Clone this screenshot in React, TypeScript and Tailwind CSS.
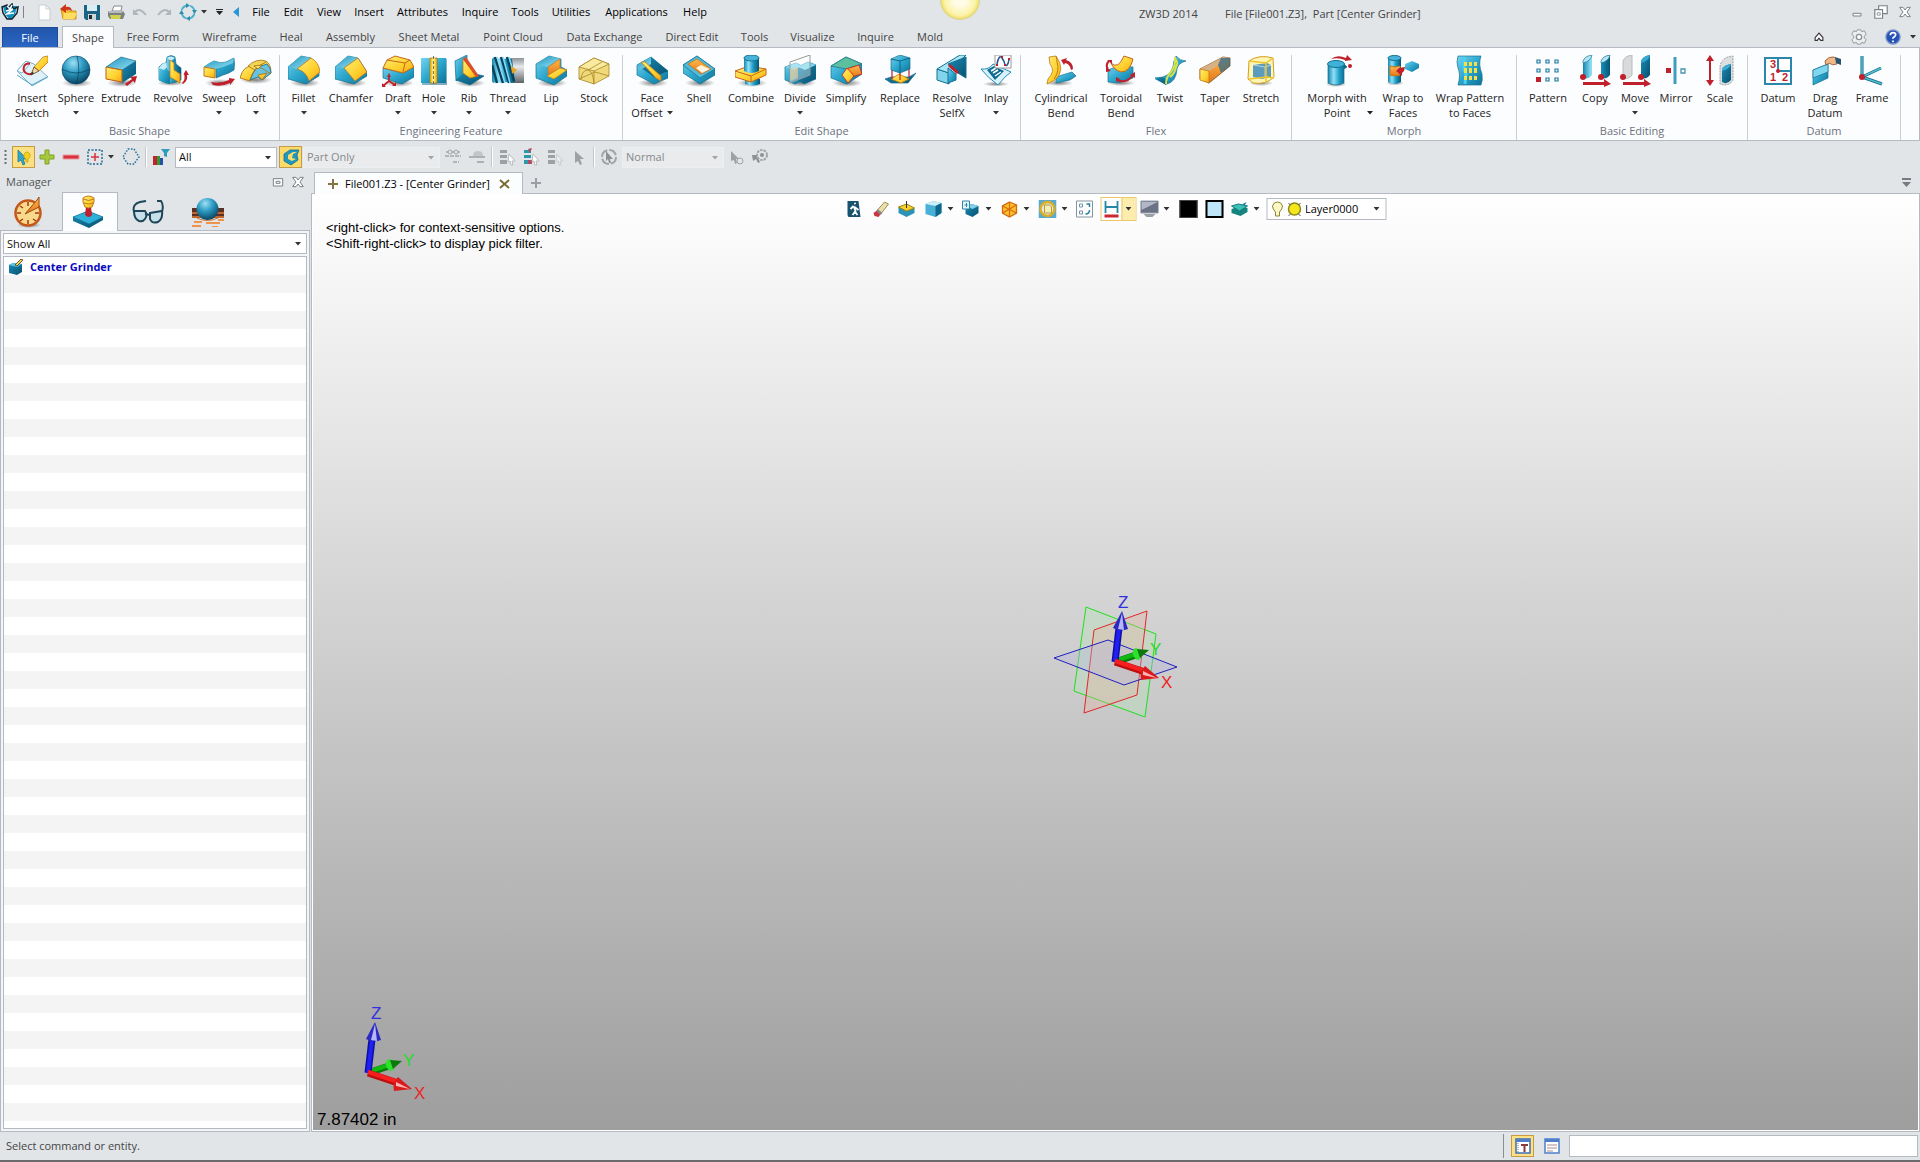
import type { ReactNode } from 'react';
import clsx from 'clsx';

const TEAL = 'url(#teal)';
const TEAL_TOP = 'url(#tealTop)';
const TEAL_DARK = 'url(#tealDark)';
const TUBE = 'url(#tube)';
const YELLOW = 'url(#yellow)';
const ORANGE = 'url(#orange)';
const BALL = 'url(#ball)';
const SHADOW = 'url(#shadow)';
const EDGE = '#17708f';
const GOLD = '#c07a1a';
const RED = '#c01f2c';

/* Shared gradients used by every icon */
function Gradients() {
  return (
    <svg width="0" height="0" className="absolute" aria-hidden="true">
      <defs>
        <linearGradient id="teal" x1="0" y1="0" x2="1" y2="1">
          <stop offset="0" stopColor="#74d3ef" />
          <stop offset="0.5" stopColor="#2ba6cd" />
          <stop offset="1" stopColor="#0d7299" />
        </linearGradient>
        <linearGradient id="tealTop" x1="0" y1="0" x2="1" y2="1">
          <stop offset="0" stopColor="#1f93bc" />
          <stop offset="1" stopColor="#98e4f8" />
        </linearGradient>
        <linearGradient id="tealDark" x1="0" y1="0" x2="1" y2="1">
          <stop offset="0" stopColor="#1b8cb5" />
          <stop offset="1" stopColor="#07506f" />
        </linearGradient>
        <linearGradient id="tube" x1="0" y1="0" x2="1" y2="0">
          <stop offset="0" stopColor="#1684ae" />
          <stop offset="0.3" stopColor="#8fe0f6" />
          <stop offset="0.6" stopColor="#1e9cc6" />
          <stop offset="1" stopColor="#075475" />
        </linearGradient>
        <linearGradient id="yellow" x1="0" y1="0" x2="1" y2="1">
          <stop offset="0" stopColor="#ffee78" />
          <stop offset="0.6" stopColor="#ffd02c" />
          <stop offset="1" stopColor="#f3a319" />
        </linearGradient>
        <linearGradient id="orange" x1="0" y1="0" x2="0" y2="1">
          <stop offset="0" stopColor="#ffb94a" />
          <stop offset="1" stopColor="#e5761a" />
        </linearGradient>
        <radialGradient id="ball" cx="0.4" cy="0.25" r="0.8">
          <stop offset="0" stopColor="#9be0f4" />
          <stop offset="0.45" stopColor="#2c99c1" />
          <stop offset="1" stopColor="#053c58" />
        </radialGradient>
        <radialGradient id="shadow">
          <stop offset="0" stopColor="#000" stopOpacity="0.5" />
          <stop offset="1" stopColor="#000" stopOpacity="0" />
        </radialGradient>
        <linearGradient id="metal" x1="0" y1="0" x2="0" y2="1">
          <stop offset="0" stopColor="#8d9499" />
          <stop offset="0.35" stopColor="#e8eaec" />
          <stop offset="1" stopColor="#5e6468" />
        </linearGradient>
        <radialGradient id="glow">
          <stop offset="0.3" stopColor="#fffbe6" />
          <stop offset="0.8" stopColor="#fbf3a8" />
          <stop offset="1" stopColor="#ecd95c" />
        </radialGradient>
      </defs>
    </svg>
  );
}

const shade = <ellipse cx="17" cy="28" rx="15" ry="4" fill={SHADOW} />;

const icons: Record<string, ReactNode> = {
  sketch: (
    <g>
      <path d="M1 16 10 6l8 3 14 13-16 9z" fill="#dff1f9" stroke="#7fb4cc" />
      <path d="M1 16l9-10 4 3-8 9z" fill="#f3fafd" stroke="#7fb4cc" />
      <path d="M1 20l15 10 15-8" fill="none" stroke="#4fa5c9" />
      <path d="M14 8.500C7 8 6 15 10 18c3 2 6 1 8-1" fill="none" stroke={RED} strokeWidth="2" />
      <path d="M18 12 27 2l5-1v6L23 16z" fill={YELLOW} stroke={GOLD} strokeWidth="0.8" />
      <path d="M18 12l5 4-8 4z" fill="#f3d7a5" stroke="#5a4020" strokeWidth="0.8" />
      <path d="M16 17l2 1-3 2z" fill="#222" />
    </g>
  ),
  sphere: (
    <g>
      {shade}
      <circle cx="16" cy="15" r="14" fill={BALL} stroke="#07496a" strokeWidth="0.6" />
      <path d="M2 14q14 8 28 0M17 1q4 14-1 28" fill="none" stroke="#06384f" strokeWidth="0.9" opacity="0.7" />
    </g>
  ),
  extrude: (
    <g>
      {shade}
      <path d="M1 12 16 2l15 4-14 9z" fill={TEAL_TOP} stroke={EDGE} strokeWidth="0.7" />
      <path d="M17 15 31 6v13l-14 9z" fill={TEAL_DARK} />
      <path d="M1 12l16 3v12L1 24z" fill={YELLOW} stroke="#c45b12" />
      <path d="M20 29l7-5-2-2 7-1-2 7-2-2-6 5z" fill={RED} />
    </g>
  ),
  revolve: (
    <g>
      <ellipse cx="14" cy="28" rx="14" ry="3" fill={SHADOW} />
      <path d="M2 12q3-4 7-4l1-6q4-3 8 0l1 7 5 4v12q-10 6-22 0z" fill={TUBE} stroke={EDGE} strokeWidth="0.7" />
      <path d="M2 13q3-5 7-5l1 6 3 3v12q-7-1-11-4z" fill={TEAL} />
      <path d="M2 13q3-5 7-5l1 4-3 3zM10 3q4-3 8 0l-4 3z" fill="#c5eefa" />
      <path d="M13 5l4 3v7l6 4v9l-10-6z" fill={YELLOW} stroke={GOLD} strokeWidth="0.8" />
      <path d="M25 28q4-4 2-9l-1 1 3-5 3 5h-2q1 6-4 9z" fill={RED} />
    </g>
  ),
  sweep: (
    <g>
      {shade}
      <path d="M1 12q6-4 10-6 7 3 12 1l8-4q1 6 0 12-6 4-11 5l-7 3V14z" fill={TEAL} stroke={EDGE} strokeWidth="0.7" />
      <path d="M1 12q6-5 10-6 6 3 12 1l8-4-1 5q-8 3-10 4l-8 2z" fill={TEAL_TOP} />
      <path d="M1 12l11 2v9L1 21z" fill={YELLOW} stroke={GOLD} />
      <path d="M8 27q9 2 18-2v-2l6 1-5 6v-2q-9 4-17 2z" fill={RED} />
    </g>
  ),
  loft: (
    <g>
      <ellipse cx="16" cy="25" rx="16" ry="4" fill={SHADOW} />
      <path d="M0 23Q3 10 14 11l4 10-8 5z" fill={YELLOW} stroke="#a06c18" strokeWidth="0.8" />
      <path d="M8 11Q16 3 26 6q5 3 5 12l-9 7-4-8z" fill="#f2d552" stroke="#a06c18" strokeWidth="0.8" />
      <path d="M10 25q4-11 8-13l9-3q4 4 4 9l-9 7-4-3z" fill="#69c3e0" stroke="#166c8c" strokeWidth="0.8" />
      <path d="M10 25q4-13 16-18M14 11q8 1 17 8" fill="none" stroke="#a06c18" strokeWidth="0.8" />
      <path d="M18 20l9-2-5 7zM14 11l8-1-4 4z" fill={YELLOW} stroke="#a06c18" strokeWidth="0.8" />
    </g>
  ),
  fillet: (
    <g>
      {shade}
      <path d="M0 12 13 1l10 2 8 14v4L18 29 0 24z" fill={TEAL} stroke={EDGE} strokeWidth="0.7" />
      <path d="M0 12 13 1l10 2L9 14z" fill={TEAL_TOP} />
      <path d="M9 14 23 3q8 4 9 14L21 26Q18 16 9 14z" fill={YELLOW} stroke={GOLD} strokeWidth="0.8" />
    </g>
  ),
  chamfer: (
    <g>
      {shade}
      <path d="M0 12 13 1l10 2 9 14v4L19 29 0 24z" fill={TEAL} stroke={EDGE} strokeWidth="0.7" />
      <path d="M0 12 13 1l10 2L9 13z" fill={TEAL_TOP} />
      <path d="M9 13 23 3l9 14-12 9z" fill={YELLOW} stroke={GOLD} strokeWidth="0.8" />
    </g>
  ),
  draft: (
    <g>
      {shade}
      <path d="M1 13l20 5 11-6v10l-12 7-19-6z" fill={TEAL} stroke={EDGE} strokeWidth="0.7" />
      <path d="M1 13 5 5l8-4 15 4 4 7-11 6z" fill={YELLOW} stroke="#c4661a" />
      <path d="M5 5l18 3-2 9M23 8l5-3" fill="none" stroke="#c4661a" />
      <path d="M7 20v6l-6 5M7 26l6 4" fill="none" stroke={RED} strokeWidth="1.800" />
      <path d="M5 22l2-4 2 4zM0 28v4h4zM14 27v4h-4z" fill={RED} />
    </g>
  ),
  hole: (
    <g>
      <path d="M4 4h25v26H4z" fill={TEAL_DARK} opacity="0.5" />
      <path d="M3 3h25v25H3z" fill={TEAL} />
      <path d="M12 3h7v25h-7z" fill="#f7c92e" stroke="#a8790c" strokeWidth="0.8" />
      <path d="M15.500 3v25" stroke="#fff3a0" strokeWidth="2" />
      <path d="M15.500 1v30" stroke="#555" strokeDasharray="3 2" strokeWidth="0.8" />
    </g>
  ),
  rib: (
    <g>
      {shade}
      <path d="M2 6l12-6v20L3 26z" fill={TEAL} stroke={EDGE} strokeWidth="0.7" />
      <path d="M14 17l17 4-14 9-14-5z" fill={TEAL_DARK} stroke={EDGE} strokeWidth="0.7" />
      <path d="M10 4l15 17-8 2-7-5z" fill={YELLOW} stroke={GOLD} strokeWidth="0.8" />
      <path d="M10 4l3-2 13 19-3 1z" fill="#d8502a" />
    </g>
  ),
  thread: (
    <g>
      <path d="M18 3h14v25H18z" fill="url(#metal)" />
      <path d="M0 4q3-4 5 0l3-1 4 1 4-1 4 1 3 23-4 1-5-1-4 1-5-1-4 1-1-2z" fill={TUBE} />
      <path d="M3 2l8 26M9 2l8 26M15 2l7 24M0 10l5 18" stroke="#06435f" strokeWidth="2.500" />
      <path d="M5 2l8 26M11 2l7 26M17 2l4 14" stroke="#8fd9f0" strokeWidth="1.500" />
      <path d="M19 11l6 4-5 4z" fill="#e6a51e" />
    </g>
  ),
  lip: (
    <g>
      {shade}
      <path d="M1 9 14 1l12 3v8l6 3v6l-13 9L1 23z" fill={TEAL} stroke={EDGE} strokeWidth="0.7" />
      <path d="M1 9 14 1l12 3-14 8z" fill={TEAL_TOP} />
      <path d="M13 12l12-8v9l-12 8z" fill={ORANGE} stroke={GOLD} strokeWidth="0.7" />
      <path d="M12 21l13-8 7 2-13 9z" fill={YELLOW} stroke={GOLD} strokeWidth="0.7" />
    </g>
  ),
  stock: (
    <g stroke="#a8852a" strokeWidth="0.8">
      <path d="M1 12 16 3l15 6v12l-15 8L1 24z" fill="#f0d978" />
      <path d="M1 12 16 3l15 6-15 7z" fill="#f8ea9e" />
      <path d="M16 16v13M3 24q1-9 7-9 5 1 6 14M10 15l14-8M1 24l16-7 14 4" fill="none" />
    </g>
  ),
  faceOffset: (
    <g>
      {shade}
      <path d="M1 10 15 2l17 14v7l-14 6L1 20z" fill={TEAL} stroke={EDGE} strokeWidth="0.7" />
      <path d="M1 10 15 2l17 14-14 6z" fill={TEAL_DARK} />
      <path d="M1 10 15 2v7L4 15z" fill={TEAL_TOP} />
      <path d="M5 7l4 0 16 14v5l-5-3z" fill={YELLOW} stroke={GOLD} strokeWidth="0.8" />
    </g>
  ),
  shell: (
    <g>
      {shade}
      <path d="M0 10 14 1l18 13v6l-15 9L0 18z" fill={TEAL} stroke={EDGE} strokeWidth="0.7" />
      <path d="M0 10 14 1l18 13-15 9z" fill="#52bbdc" stroke={EDGE} strokeWidth="0.7" />
      <path d="M5 9l9-5 14 10-10 5z" fill={ORANGE} stroke={GOLD} strokeWidth="0.8" />
      <path d="M13 13l5-3 9 4-8 4z" fill="#fff4df" />
    </g>
  ),
  combine: (
    <g>
      {shade}
      <path d="M10 24h15v5q-7 3-15 0z" fill={TUBE} />
      <path d="M0 16l14-5 17 3v6l-15 7L0 22z" fill={YELLOW} stroke="#c4661a" />
      <path d="M0 16l16 5v6M16 21l15-7" fill="none" stroke="#c4661a" />
      <path d="M9 3v13q7 4 15 0V3z" fill={TUBE} />
      <ellipse cx="16.500" cy="3" rx="7.500" ry="3" fill="#44b4da" stroke={EDGE} />
    </g>
  ),
  divide: (
    <g>
      {shade}
      <path d="M1 12l11-4 6 3v15l-7 3-10-4z" fill={TEAL} stroke={EDGE} strokeWidth="0.7" />
      <path d="M14 12l10-5 8 3v14l-12 5-6-4z" fill={TEAL_DARK} stroke={EDGE} strokeWidth="0.7" />
      <path d="M1 12l9 3 8-4-6-3zM14 12l7 3 11-5-8-3z" fill="#7ad4ee" />
      <path d="M6 7 26 0v20L6 28z" fill="#fff" fillOpacity="0.35" stroke="#999" />
      <path d="M6 14l8-2v11l-8 3z" fill="#f1ca92" fillOpacity="0.6" />
    </g>
  ),
  simplify: (
    <g>
      {shade}
      <path d="M1 11 16 2l16 7v10l-15 10L1 23z" fill={TEAL} stroke={EDGE} strokeWidth="0.7" />
      <path d="M1 11 16 2l16 7-16 5z" fill="#5cbf9d" stroke={EDGE} strokeWidth="0.7" />
      <path d="M16 14l13-4 3 9-10 3z" fill={ORANGE} stroke={RED} strokeWidth="0.8" />
      <path d="M12 20l5-7 7 8-6 7z" fill={YELLOW} stroke={RED} strokeWidth="0.8" />
    </g>
  ),
  replace: (
    <g>
      <path d="M1 24l6-2h18l7-4-8 10H7z" fill={TEAL_DARK} stroke={EDGE} strokeWidth="0.7" />
      <path d="M7 24l8-5 10 5-8 4z" fill={YELLOW} stroke={GOLD} strokeWidth="0.8" />
      <path d="M8 14v10M16 16v9M25 13v9" stroke={RED} strokeWidth="1.200" />
      <path d="M7 4l9-4 10 3v11l-10 4-9-3z" fill={TEAL} stroke={EDGE} strokeWidth="0.7" />
      <path d="M7 4l9 2 10-3M16 6v12" fill="none" stroke="#0c6488" />
    </g>
  ),
  resolve: (
    <g>
      <path d="M1 14l12 4v11L1 25z" fill="#82d3ec" stroke={EDGE} />
      <path d="M1 14 24 0h6L13 18z" fill="#a8e5f7" stroke={EDGE} />
      <path d="M12 9 30 2v21L17 15z" fill={TEAL_DARK} stroke={EDGE} />
      <path d="M12 13l8 6v6l-8 3z" fill={TEAL} stroke={EDGE} />
      <path d="M13 10l9 8" stroke={RED} strokeWidth="3" />
    </g>
  ),
  inlay: (
    <g>
      <ellipse cx="16" cy="29" rx="13" ry="2.500" fill={SHADOW} />
      <path d="M1 14q8 1 12-5l18 8q-6 4-13 13Q8 23 1 14z" fill="#d8f1fa" stroke="#238fb7" />
      <path d="M7 15l7-4 10 5-9 9z" fill="#0e6c94" />
      <path d="M11 16l5-3M13 18l5-3M15 21l6-4" stroke="#fff" strokeWidth="1.500" />
      <path d="M15 0h16v13H15z" fill="#fff" stroke="#999" />
      <path d="M17 9q2-10 5-6t3 7q3 2 4-6" fill="none" stroke="#20538f" strokeWidth="1.500" />
      <path d="M16 9h2v2h-2zM21 1h2v2h-2zM24 9h2v2h-2zM28 3h2v2h-2z" fill={RED} />
    </g>
  ),
  cylBend: (
    <g>
      <ellipse cx="14" cy="28" rx="14" ry="3" fill={SHADOW} />
      <path d="M11 22l16-5 4 4-6 4-14 3z" fill={TEAL} stroke={EDGE} strokeWidth="0.7" />
      <path d="M4 2l7-1q10 14-1 24l-8 4 1-5q8-8 2-15z" fill={YELLOW} stroke={GOLD} strokeWidth="0.8" />
      <path d="M11 1q1 4 1 6 3 9-3 17" fill="none" stroke={GOLD} />
      <path d="M26 15q-1-6-6-7l-1 2-3-5 6-2-1 2q7 2 7 9z" fill={RED} />
    </g>
  ),
  torBend: (
    <g>
      <ellipse cx="16" cy="28" rx="14" ry="3" fill={SHADOW} />
      <path d="M3 15l10-4 15 1v11l-15 5-10-1z" fill={TEAL} stroke={EDGE} strokeWidth="0.7" />
      <path d="M6 8q7 7 13-7l9 3q-3 13-12 13-7-2-10-9z" fill={YELLOW} stroke="#c4661a" />
      <path d="M3 14q-3-4 1-8M12 25q10 4 16-5" fill="none" stroke={RED} strokeWidth="2" />
      <path d="M2 5h5v4zM25 20l5-3v6zM11 22l4 2-4 3zM1 12l5 4-5 1z" fill={RED} />
    </g>
  ),
  twist: (
    <g>
      <path d="M1 23l8-1q10-3 11-16l2-5q4 5 10 5-8 2-9 8-1 13-10 15-8-5-12-6z" fill={TEAL} stroke={EDGE} strokeWidth="0.7" />
      <path d="M1 24l8-2 5 5-2 3z" fill={TEAL_DARK} />
      <path d="M12 29q0-7 5-12 5-6 4-15M21 3q4 5 1 9-1 6-6 10" fill="none" stroke="#d5e44c" strokeWidth="2" />
    </g>
  ),
  taper: (
    <g>
      <path d="M1 14 24 2l7 1v8L10 28l-9-4z" fill={ORANGE} stroke="#7a4a20" strokeWidth="0.8" />
      <path d="M1 14 24 2l7 1L10 16z" fill="#d7b184" />
      <path d="M22 3l9 0v8l-9 7-3-8z" fill="#23658c" opacity="0.7" />
      <path d="M1 14l9 2v12l-9-3z" fill={YELLOW} stroke={GOLD} strokeWidth="0.8" />
    </g>
  ),
  stretch: (
    <g>
      <ellipse cx="16" cy="28" rx="12" ry="3" fill={SHADOW} />
      <path d="M4 6q10-7 24-3l1 19q-8 8-21 6l-5-4z" fill="#fff6b5" stroke="#d69c1e" />
      <path d="M8 10l14-2 4 2v12l-9 2-9-2z" fill="#5b9bbd" />
      <path d="M8 10l12 2v12M20 12l6-2" fill="none" stroke="#c8dfea" strokeWidth="0.8" />
      <path d="M4 6l17 2v20M21 8l7-5M4 24l18-2 7 1" fill="none" stroke="#f0c52c" strokeWidth="1.500" />
    </g>
  ),
  morph: (
    <g>
      <ellipse cx="15" cy="29" rx="11" ry="3" fill={SHADOW} />
      <path d="M7 10v18q8 4 16 0V14l3-2-3-3z" fill={TUBE} stroke={EDGE} strokeWidth="0.7" />
      <ellipse cx="15" cy="9" rx="8.500" ry="3.500" fill="#3fb2d9" stroke={EDGE} />
      <path d="M10 4q6-5 15-1l1-3 5 5-7 1 0-1q-7-3-14-1z" fill={RED} />
      <circle cx="29" cy="11" r="2" fill={RED} />
    </g>
  ),
  wrapFaces: (
    <g>
      <ellipse cx="8" cy="28" rx="9" ry="2.500" fill={SHADOW} />
      <path d="M1 3v24q6 4 13 0V3z" fill={TUBE} />
      <ellipse cx="7.500" cy="3" rx="6.500" ry="2.500" fill="#44b4da" stroke={EDGE} />
      <path d="M3 11q5 2 10 0v9q-5 2-10 0z" fill={ORANGE} stroke={GOLD} />
      <path d="M18 9l7-3 7 3v4l-7 4-7-3z" fill={TEAL} />
      <path d="M18 12l-6 1-3 3 6 5v-3l2-2z" fill={RED} />
    </g>
  ),
  wrapPattern: (
    <g>
      <path d="M4 1h23q-3 8 1 18 1 6-1 11H4q3-10 0-17-2-6 0-12z" fill={TEAL} stroke={EDGE} strokeWidth="0.7" />
      <path d="M11 2q-3 9 1 17l-1 10" fill="none" stroke="#4bd0ee" strokeWidth="3" />
      <path d="M10 7h3v4h-3zM15 7h3v4h-3zM20 7h3v4h-3zM10 13h3v5h-3zM15 13h3v5h-3zM20 13h3v5h-3zM10 21h3v4h-3zM15 21h3v4h-3zM20 21h3v4h-3z" fill="#f5e146" />
    </g>
  ),
  pattern: (
    <g fill="#eaf6fb" stroke="#247ba3" strokeWidth="1.200">
      {[5, 14, 23].map((y) =>
        [5, 14, 23].map((x) => <path key={`${x}-${y}`} d={`M${x} ${y}h3v3h-3z`} />),
      )}
      <path d="M4 22h5v5H4z" fill={RED} stroke="none" />
    </g>
  ),
  copy: (
    <g>
      <path d="M4 6q2-5 9-6v20q-4 5-9 3zM22 6q2-5 9-6v20q-4 5-9 3z" fill={TUBE} />
      <path d="M4 6q2-5 9-6-1 6-9 8zM22 6q2-5 9-6-1 6-9 8z" fill="#b6e6f5" stroke={EDGE} strokeWidth="0.6" />
      <circle cx="4" cy="22" r="3" fill={RED} />
      <circle cx="22" cy="22" r="3" fill={RED} />
      <path d="M4 27h21v-3l7 5-7 3v-2H4z" fill={RED} />
    </g>
  ),
  move: (
    <g>
      <path d="M4 6q2-5 9-6v20q-4 5-9 3z" fill="#d8dadb" stroke="#bbb" />
      <path d="M22 6q2-5 9-6v20q-4 5-9 3z" fill={TEAL_DARK} />
      <path d="M22 6q2-5 9-6-1 6-9 8z" fill="#34a8d2" />
      <circle cx="4" cy="22" r="3" fill={RED} />
      <circle cx="22" cy="22" r="3" fill={RED} />
      <path d="M4 27h21v-3l7 5-7 3v-2H4z" fill={RED} />
    </g>
  ),
  mirror: (
    <g>
      <path d="M15 2v27" stroke="#3f9dbd" strokeWidth="3" />
      <path d="M6 13h5v5H6z" fill={RED} />
      <path d="M21 14h4v4h-4z" fill="#fff" stroke="#4794b3" strokeWidth="1.300" />
    </g>
  ),
  scale: (
    <g>
      <path d="M6 0l4 6H7v19h3l-4 6-4-6h3V6H2z" fill={RED} />
      <path d="M16 12q1-10 13-11v24q-4 7-13 4z" fill="#dcdfe0" stroke="#9a9fa2" strokeDasharray="2 1" />
      <path d="M18 14q2-4 9-5v16q-4 5-9 2z" fill={TEAL_DARK} />
      <path d="M18 14q2-4 9-5-1 5-9 7z" fill="#3aabd3" />
    </g>
  ),
  datum: (
    <g>
      <path d="M3 3h26v26H3z" fill="#fff" stroke="#2c86ab" strokeWidth="2" />
      <path d="M16 3v13h13" fill="none" stroke="#2c86ab" strokeWidth="2" />
      <circle cx="16" cy="16" r="2" fill={RED} />
      <g fill={RED} fontFamily="Liberation Sans, sans-serif" fontWeight="700" fontSize="11">
        <text x="8" y="13">3</text>
        <text x="8" y="26">1</text>
        <text x="20" y="26">2</text>
      </g>
    </g>
  ),
  dragDatum: (
    <g>
      <path d="M4 15l15-6v14L4 30z" fill={TEAL} stroke={EDGE} strokeWidth="0.7" />
      <path d="M4 15l15-6v8L4 23z" fill="#7fd6ee" stroke={EDGE} strokeWidth="0.7" />
      <path d="M16 6q4-5 9-4l3 2v5q-5 2-8-1l-3 2z" fill="#f1b98a" stroke="#8b4d22" strokeWidth="0.8" />
      <path d="M26 2l6 2v6l-5-2z" fill="#26536d" />
    </g>
  ),
  frame: (
    <g>
      <path d="M6 22V1M6 22l19-9M6 22l20 7" stroke="#0e617e" strokeWidth="3" />
      <path d="M6 22V1M6 22l19-9M6 22l20 7" stroke="#4fc0d6" strokeWidth="1.500" />
      <circle cx="6" cy="22" r="3" fill={RED} />
    </g>
  ),
};

function Caret({ className }: { className?: string }) {
  return (
    <svg width="6" height="4" viewBox="0 0 6 4" className={clsx('shrink-0', className ?? 'text-[#333]')} aria-hidden="true">
      <path d="M0 0h6L3 3.500z" fill="currentColor" />
    </svg>
  );
}

interface Tool {
  icon: string;
  lines: string[];
  width: string;
  menu?: 'below' | 'inline' | 'side';
}

interface Group {
  label: string;
  pad: string;
  tools: Tool[];
}

const groups: Group[] = [
  {
    label: 'Basic Shape',
    pad: 'pl-2 pr-[5px]',
    tools: [
      { icon: 'sketch', lines: ['Insert', 'Sketch'], width: 'w-12' },
      { icon: 'sphere', lines: ['Sphere'], width: 'w-10', menu: 'below' },
      { icon: 'extrude', lines: ['Extrude'], width: 'w-[50px]' },
      { icon: 'revolve', lines: ['Revolve'], width: 'w-[54px]' },
      { icon: 'sweep', lines: ['Sweep'], width: 'w-[38px]', menu: 'below' },
      { icon: 'loft', lines: ['Loft'], width: 'w-9', menu: 'below' },
    ],
  },
  {
    label: 'Engineering Feature',
    pad: 'pl-[3px] pr-[9px]',
    tools: [
      { icon: 'fillet', lines: ['Fillet'], width: 'w-[41px]', menu: 'below' },
      { icon: 'chamfer', lines: ['Chamfer'], width: 'w-[54px]' },
      { icon: 'draft', lines: ['Draft'], width: 'w-10', menu: 'below' },
      { icon: 'hole', lines: ['Hole'], width: 'w-[31px]', menu: 'below' },
      { icon: 'rib', lines: ['Rib'], width: 'w-10', menu: 'below' },
      { icon: 'thread', lines: ['Thread'], width: 'w-[38px]', menu: 'below' },
      { icon: 'lip', lines: ['Lip'], width: 'w-12' },
      { icon: 'stock', lines: ['Stock'], width: 'w-[38px]' },
    ],
  },
  {
    label: 'Edit Shape',
    pad: 'pl-[5px] pr-1',
    tools: [
      { icon: 'faceOffset', lines: ['Face', 'Offset'], width: 'w-12', menu: 'inline' },
      { icon: 'shell', lines: ['Shell'], width: 'w-[46px]' },
      { icon: 'combine', lines: ['Combine'], width: 'w-[58px]' },
      { icon: 'divide', lines: ['Divide'], width: 'w-10', menu: 'below' },
      { icon: 'simplify', lines: ['Simplify'], width: 'w-[52px]' },
      { icon: 'replace', lines: ['Replace'], width: 'w-14' },
      { icon: 'resolve', lines: ['Resolve', 'SelfX'], width: 'w-12' },
      { icon: 'inlay', lines: ['Inlay'], width: 'w-10', menu: 'below' },
    ],
  },
  {
    label: 'Flex',
    pad: 'px-[9px]',
    tools: [
      { icon: 'cylBend', lines: ['Cylindrical', 'Bend'], width: 'w-[62px]' },
      { icon: 'torBend', lines: ['Toroidal', 'Bend'], width: 'w-[58px]' },
      { icon: 'twist', lines: ['Twist'], width: 'w-10' },
      { icon: 'taper', lines: ['Taper'], width: 'w-[50px]' },
      { icon: 'stretch', lines: ['Stretch'], width: 'w-[42px]' },
    ],
  },
  {
    label: 'Morph',
    pad: 'px-[9px]',
    tools: [
      { icon: 'morph', lines: ['Morph with', 'Point'], width: 'w-[72px]', menu: 'side' },
      { icon: 'wrapFaces', lines: ['Wrap to', 'Faces'], width: 'w-[60px]' },
      { icon: 'wrapPattern', lines: ['Wrap Pattern', 'to Faces'], width: 'w-[74px]' },
    ],
  },
  {
    label: 'Basic Editing',
    pad: 'px-2',
    tools: [
      { icon: 'pattern', lines: ['Pattern'], width: 'w-[46px]' },
      { icon: 'copy', lines: ['Copy'], width: 'w-12' },
      { icon: 'move', lines: ['Move'], width: 'w-8', menu: 'below' },
      { icon: 'mirror', lines: ['Mirror'], width: 'w-[50px]' },
      { icon: 'scale', lines: ['Scale'], width: 'w-[38px]' },
    ],
  },
  {
    label: 'Datum',
    pad: 'pl-2 pr-[6px]',
    tools: [
      { icon: 'datum', lines: ['Datum'], width: 'w-11' },
      { icon: 'dragDatum', lines: ['Drag', 'Datum'], width: 'w-[50px]' },
      { icon: 'frame', lines: ['Frame'], width: 'w-11' },
    ],
  },
];

const menus = [
  { label: 'File', width: 'w-8' },
  { label: 'Edit', width: 'w-[33px]' },
  { label: 'View', width: 'w-[38px]' },
  { label: 'Insert', width: 'w-[42px]' },
  { label: 'Attributes', width: 'w-[65px]' },
  { label: 'Inquire', width: 'w-[50px]' },
  { label: 'Tools', width: 'w-10' },
  { label: 'Utilities', width: 'w-[52px]' },
  { label: 'Applications', width: 'w-[79px]' },
  { label: 'Help', width: 'w-[38px]' },
];

const tabs = [
  { label: 'Free Form', width: 'w-[76px]' },
  { label: 'Wireframe', width: 'w-[77px]' },
  { label: 'Heal', width: 'w-[46px]' },
  { label: 'Assembly', width: 'w-[73px]' },
  { label: 'Sheet Metal', width: 'w-[84px]' },
  { label: 'Point Cloud', width: 'w-[84px]' },
  { label: 'Data Exchange', width: 'w-[99px]' },
  { label: 'Direct Edit', width: 'w-[76px]' },
  { label: 'Tools', width: 'w-[49px]' },
  { label: 'Visualize', width: 'w-[67px]' },
  { label: 'Inquire', width: 'w-[59px]' },
  { label: 'Mold', width: 'w-[50px]' },
];

function IconButton({ label, className, children, size = 18 }: { label: string; className?: string; children: ReactNode; size?: number }) {
  return (
    <button type="button" aria-label={label} className={clsx('flex shrink-0 items-center justify-center', className ?? 'w-6')}>
      <svg width={size} height={size} viewBox="0 0 18 18" fill="none" className="shrink-0">
        {children}
      </svg>
    </button>
  );
}

function TitleBar() {
  return (
    <header className="relative flex h-6 items-center pl-px">
      <IconButton label="ZW3D" className="w-[18px]">
        <path d="M2 3h14l-2 8-5 6-5-6z" fill="#0f8fc0" />
        <path d="M1 4l5-2v4l5-5 1 5 5-2-1 6-5 6H6L2 10z" stroke="#10222d" strokeWidth="1.500" />
        <path d="M6 3l3 3 2-4M5 8l7-2-6 5 7-1" stroke="#fff" strokeWidth="1.500" />
      </IconButton>
      <span className="ml-1 mr-2 h-3 w-px bg-[#7d8388]" />
      <IconButton label="New">
        <path d="M4 2h7l4 4v11H4z" fill="#fff" stroke="#c9cdd0" />
        <path d="M11 2v4h4" stroke="#c9cdd0" />
      </IconButton>
      <IconButton label="Open">
        <path d="M2 6h5l2 2h8v8H4z" fill="#f6c22d" stroke="#c9901a" />
        <path d="M5 10h13l-3 6H4z" fill="#ffdc62" />
        <path d="M1 6l6-5v3q5-1 6 4-3-2-6-1v3z" fill="#cf3414" />
      </IconButton>
      <IconButton label="Save">
        <path d="M1 2h16v15H3l-2-2z" fill="#1b6583" />
        <path d="M4 2h10v6H4z" fill="#d9edf5" />
        <path d="M5 11h8v6H5z" fill="#cfd6da" />
        <path d="M6 12h3v4H6z" fill="#1d2c34" />
      </IconButton>
      <IconButton label="Print">
        <path d="M5 8l2-5h8l-1 5z" fill="#fff" stroke="#888" />
        <path d="M1 8h15l2 3-2 5H3l-2-3z" fill="#7b8084" />
        <path d="M3 12h11l-1 4H4z" fill="#cfd24a" />
        <path d="M1 8h15l-1 2H2z" fill="#b7bbbe" />
      </IconButton>
      <IconButton label="Undo">
        <path d="M4 9q5-5 11 3" stroke="#b1b6ba" strokeWidth="2" />
        <path d="M2 6v6h6z" fill="#b1b6ba" />
      </IconButton>
      <IconButton label="Redo">
        <path d="M14 9q-5-5-11 3" stroke="#b1b6ba" strokeWidth="2" />
        <path d="M16 6v6h-6z" fill="#b1b6ba" />
      </IconButton>
      <IconButton label="Regenerate">
        <circle cx="9" cy="9" r="6.500" stroke="#4fb0c9" strokeWidth="2" strokeDasharray="7.200 3" strokeDashoffset="-1.500" />
        <path d="M7 0l4 2.500L7 5zM18 7l-2.500 4L13 7zM11 18l-4-2.500 4-2.500zM0 11l2.500-4L5 11z" fill="#2c8fae" />
      </IconButton>
      <span className="ml-px flex w-[15px]">
        <Caret />
      </span>
      <svg width="7" height="6" viewBox="0 0 7 6" className="mr-[10px]" aria-hidden="true">
        <path d="M0 0h7v1H0zM0 2h7L3.500 6z" fill="#222" />
      </svg>
      <svg width="6" height="10" viewBox="0 0 6 10" aria-hidden="true">
        <path d="M6 0v10L0 5z" fill="#2795d6" />
      </svg>
      <nav className="ml-[6px] flex text-black">
        {menus.map((m) => (
          <button key={m.label} type="button" className={clsx('text-center whitespace-nowrap', m.width)}>
            {m.label}
          </button>
        ))}
      </nav>
      <p className="absolute left-[1139px] top-[6px] whitespace-pre">ZW3D 2014</p>
      <p className="absolute left-[1225px] top-[6px] whitespace-pre">File [File001.Z3],  Part [Center Grinder]</p>
      <svg width="42" height="21" viewBox="0 0 42 21" className="absolute left-1/2 top-0 -translate-x-1/2" aria-hidden="true">
        <circle cx="21" cy="0" r="19.500" fill="url(#glow)" stroke="#d9d39a" />
      </svg>
      <div className="ml-auto flex items-center pr-[3px] text-[#7c8186]">
        <IconButton label="Minimize" size={12}>
          <path d="M3 11h12v4H3z" fill="#fff" stroke="currentColor" strokeWidth="1.500" />
        </IconButton>
        <IconButton label="Restore" size={14}>
          <path d="M6 1h11v10H6z" fill="#fff" stroke="currentColor" strokeWidth="1.500" />
          <path d="M1 6h10v11H1z" fill="#fff" stroke="currentColor" strokeWidth="1.500" />
          <path d="M4 10h4v3H4z" stroke="currentColor" />
        </IconButton>
        <IconButton label="Close" size={12}>
          <path d="M1 2h5l3 4 3-4h5l-5 7 5 7h-5l-3-4-3 4H1l5-7z" fill="#fff" stroke="currentColor" strokeWidth="1.500" />
        </IconButton>
      </div>
    </header>
  );
}

function RibbonTabs() {
  return (
    <div className="mt-[2px] flex h-[22px] pl-[2px] leading-[20px]">
      <button type="button" className="mt-px mr-1 h-[21px] w-14 border border-[#1d4c9c] bg-linear-to-b from-[#2156ab] to-[#2c66c4] leading-[17px] text-white">
        File
      </button>
      <button type="button" className="relative z-10 mr-px w-[52px] border border-b-0 border-[#b4b9c2] bg-[#fcfdfe]">
        Shape
      </button>
      {tabs.map((t) => (
        <button key={t.label} type="button" className={clsx('whitespace-nowrap', t.width)}>
          {t.label}
        </button>
      ))}
      <div className="ml-auto flex items-center pr-1">
        <IconButton label="Collapse ribbon" className="mr-6 w-4" size={10}>
          <path d="M2 10l7-8 7 8v5h-4l-3-4-3 4H2z" fill="#fff" stroke="#333" strokeWidth="2" />
        </IconButton>
        <IconButton label="Settings" className="mr-[18px] w-4" size={16}>
          <path d="M7 1h4l1 2 3-1 2 4-2 2v2l2 2-2 4-3-1-1 2H7l-1-2-3 1-2-4 2-2V8L1 6l2-4 3 1z" fill="#eceef0" stroke="#8c9195" />
          <circle cx="9" cy="9" r="3" fill="#fff" stroke="#8c9195" strokeWidth="1.500" />
        </IconButton>
        <IconButton label="Help" className="mr-[9px] w-4" size={16}>
          <circle cx="9" cy="9" r="8" fill="#2452b8" stroke="#7d97c9" strokeWidth="1.500" />
          <path d="M6 7q0-3 3-3t3 2.500q0 1.500-3 3.500v1M9 13v2" stroke="#fff" strokeWidth="2" />
        </IconButton>
        <Caret />
      </div>
    </div>
  );
}

function ToolButton({ tool }: { tool: Tool }) {
  const [first, second] = tool.lines;
  return (
    <button type="button" className={clsx('flex shrink-0 flex-col items-center whitespace-nowrap leading-[15px] text-[#222]', tool.width)}>
      <svg width="32" height="32" viewBox="0 0 32 32" fill="none" className="mb-[3px] shrink-0" aria-hidden="true">
        {icons[tool.icon]}
      </svg>
      <span>{first}</span>
      {tool.menu === 'side' && (
        <span className="grid w-full grid-cols-[1fr_auto_1fr] items-center">
          <span />
          {second}
          <Caret className="justify-self-end" />
        </span>
      )}
      {tool.menu === 'inline' && (
        <span className="flex items-center gap-1">
          {second}
          <Caret />
        </span>
      )}
      {tool.menu === 'below' && (
        <span className="flex h-[15px] items-center">
          <Caret />
        </span>
      )}
      {!tool.menu && second && <span>{second}</span>}
    </button>
  );
}

function Ribbon() {
  return (
    <div className="flex h-[94px] shrink-0 overflow-hidden border border-[#b4b9c2] border-l-[#c8ccd2] bg-[#fcfdfe] pt-[7px]">
      {groups.map((g) => (
        <section key={g.label} className="flex shrink-0 flex-col justify-between border-r border-[#c9cdd5] first:-ml-px">
          <div className={clsx('flex items-start', g.pad)}>
            {g.tools.map((t) => (
              <ToolButton key={t.lines.join()} tool={t} />
            ))}
          </div>
          <h2 className="pb-[1px] text-center leading-4 text-[#6c7280]">{g.label}</h2>
        </section>
      ))}
    </div>
  );
}

function Combo({ label, value, className, disabled }: { label: string; value: string; className: string; disabled?: boolean }) {
  return (
    <span className={clsx('relative flex h-[21px] shrink-0 border', className, disabled ? 'border-[#eceeef] bg-[#e9ebec] text-[#868a8d]' : 'border-[#b4b9c2] bg-white text-[#111]')}>
      <select aria-label={label} disabled={disabled} className="w-full appearance-none pl-[3px] pr-4 opacity-100 outline-none">
        <option>{value}</option>
      </select>
      <Caret className={clsx('pointer-events-none absolute right-[5px] top-2', disabled ? 'text-[#a0a4a7]' : 'text-[#333]')} />
    </span>
  );
}

function Divider() {
  return <span className="mx-[2px] h-5 w-[2px] shrink-0 border-l border-[#c3c7cb] bg-white" />;
}

const stack = 'M2 2h7v3H2zM2 7h7v3H2zM2 12h7v4H2z';
const pointer = 'M11 6l6 7h-3l1 4h-2l-1-4-2 1z';

function FilterBar() {
  return (
    <div className="flex h-[31px] shrink-0 items-center pl-1 pt-px">
      <svg width="3" height="16" viewBox="0 0 3 16" className="mr-[5px]" aria-hidden="true">
        <path d="M1.500 1v14" stroke="#6b7277" strokeWidth="2" strokeDasharray="2 2" />
      </svg>
      <IconButton label="Pick" className="h-[22px] w-[23px] border border-[#c79a43] bg-[#fbe183]">
        <path d="M3 2l9 9-4 0 2 5-2 1-2-5-3 2z" fill="#36a4c4" stroke="#1d7d9b" strokeWidth="0.800" />
        <path d="M9 6q3-4 6 0 1 3-2 5v3h-2v-3Q8 9 9 6z" fill="#f7d21d" stroke="#caa00e" strokeWidth="0.800" />
      </IconButton>
      <IconButton label="Add to pick">
        <path d="M7 2h4v5h5v4h-5v5H7v-5H2V7h5z" fill="#a6c940" stroke="#7fa324" />
      </IconButton>
      <IconButton label="Remove from pick">
        <path d="M1 7h16v4H1z" fill="#d8323e" stroke="#ec9aa0" />
      </IconButton>
      <IconButton label="Pick box">
        <path d="M2 2h14v14H2z" stroke="#256c96" strokeWidth="1.500" strokeDasharray="2 1.500" />
        <path d="M9 5v8M5 9h8" stroke="#d8323e" strokeWidth="1.500" />
      </IconButton>
      <Caret className="ml-px mr-[5px] text-[#333]" />
      <IconButton label="Pick polygon">
        <path d="M6 1h6l5 8-5 7H6L1 9z" stroke="#256c96" strokeWidth="1.500" strokeDasharray="1.500 1.500" />
      </IconButton>
      <Divider />
      <IconButton label="Filter">
        <path d="M1 8h4v9H1z" fill="#c7202b" />
        <path d="M5 8h3v9H5z" fill="#2f9a3b" />
        <path d="M8 10h3v7H8z" fill="#2451a3" />
        <path d="M9 1h9l-3 4v4l-3-1V5z" fill="#2e9dbd" />
      </IconButton>
      <Combo label="Entity filter" value="All" className="ml-[2px] w-[102px]" />
      <IconButton label="Pick scope" className="ml-[2px] h-[22px] w-[23px] border border-[#c79a43] bg-[#fbdc6a]">
        <path d="M2 6l6-4h9l-2 5 1 5-7 5-7-4z" fill="#2297bd" stroke="#14708f" strokeWidth="0.800" />
        <path d="M6 7l5-3h4l-4 2-1 4 4 1-4 2-4-2z" fill="#fbdc6a" />
      </IconButton>
      <Combo label="Scope" value="Part Only" className="ml-px w-[137px]" disabled />
      <IconButton label="Link" className="ml-px w-6">
        <path d="M2 4h14M1 8h16M9 14h6" stroke="#b2b6b9" strokeWidth="2" strokeDasharray="4 1" />
        <circle cx="6" cy="4" r="2" fill="#e1e5e8" stroke="#a2a6a9" />
        <circle cx="12" cy="4" r="2" fill="#e1e5e8" stroke="#a2a6a9" />
      </IconButton>
      <IconButton label="Group">
        <path d="M5 8q0-5 5-5t5 5z" fill="#c3c6c8" />
        <path d="M1 9h16M9 14h7" stroke="#acb0b3" strokeWidth="2" />
      </IconButton>
      <Divider />
      <IconButton label="Pick all">
        <path d={stack} fill="#9da1a4" />
        <path d={pointer} fill="#fff" stroke="#bbb" />
      </IconButton>
      <IconButton label="Pick last">
        <path d={stack} fill="#2a9aa8" />
        <path d="M6 1l4-1-2 5M6 12h4v4H6z" fill="#b34a66" />
        <path d={pointer} fill="#fff" stroke="#bbb" />
      </IconButton>
      <IconButton label="Pick list">
        <path d={stack} fill="#9da1a4" />
        <path d={pointer} fill="#e8eaeb" stroke="#ccc" />
      </IconButton>
      <IconButton label="Pointer">
        <path d="M5 3l9 8-4 0 2 5-2 1-2-4-3 2z" fill="#9da1a4" />
      </IconButton>
      <Divider />
      <IconButton label="Snap">
        <circle cx="9" cy="9" r="7" stroke="#a0a4a7" strokeWidth="2" strokeDasharray="9 2" />
        <path d="M6 3l7 8h-3l1 4-2 0-1-4-2 2z" fill="#8d9194" />
      </IconButton>
      <Combo label="Mode" value="Normal" className="ml-px w-[102px]" disabled />
      <IconButton label="Pick options">
        <path d="M4 3l8 8-3 0 1 4-2 1-1-4-3 1z" fill="#9da1a4" />
        <circle cx="13" cy="13" r="3" stroke="#a0a4a7" />
      </IconButton>
      <IconButton label="Pick settings">
        <path d="M1 7l9 0-3 3 2 4-2 1-2-4-3 2z" fill="#8d9194" />
        <circle cx="11" cy="7" r="5" fill="#e1e5e8" stroke="#a0a4a7" strokeWidth="2" strokeDasharray="2.500 1" />
        <circle cx="11" cy="7" r="2" fill="#8d9194" />
      </IconButton>
    </div>
  );
}

function Manager() {
  return (
    <aside className="flex w-[310px] shrink-0 flex-col">
      <div className="flex h-5 items-center pl-[6px] pr-[2px] text-[#555]">
        <h2 className="mr-auto">Manager</h2>
        <IconButton label="Float" size={12} className="w-5">
          <path d="M2 4h14v11H2z" fill="#fff" stroke="#7c8186" strokeWidth="1.500" />
          <path d="M6 8h6v3H6z" stroke="#7c8186" strokeWidth="1.500" />
        </IconButton>
        <IconButton label="Close manager" size={12} className="w-5">
          <path d="M1 2h5l3 4 3-4h5l-5 7 5 7h-5l-3-4-3 4H1l5-7z" fill="#fff" stroke="#7c8186" strokeWidth="1.500" />
        </IconButton>
      </div>
      <div className="relative z-10 -mb-px flex h-[39px]">
        <button type="button" aria-label="History" className="flex w-[62px] items-center pl-3">
          <svg width="32" height="32" viewBox="0 0 32 32" aria-hidden="true">
            <ellipse cx="17" cy="29" rx="12" ry="3" fill={SHADOW} />
            <circle cx="16" cy="17" r="12.500" fill="#f8d98c" stroke="#c4571a" strokeWidth="2.500" />
            <path d="M16 6v4M16 24v4M5 17h4M23 17h4M8 10l3 2M24 25l-3-2M8 25l3-2" stroke="#a03a14" strokeWidth="1.500" />
            <path d="M13 18 25 4l2-3v10z" fill={ORANGE} stroke="#9c4a10" />
          </svg>
        </button>
        <button type="button" aria-label="Features" className="flex w-[56px] items-center border border-b-0 border-[#b4b9c2] bg-[#fcfdfe] pl-[9px]">
          <svg width="32" height="34" viewBox="0 0 32 34" aria-hidden="true">
            <path d="M1 22l15-6 15 6v3l-14 8-16-7z" fill={TEAL_DARK} />
            <path d="M1 22l15-6 15 6-14 7z" fill="#2fb0da" stroke={EDGE} strokeWidth="0.600" />
            <path d="M14 12h5l1 8q-3 4-7 0z" fill={RED} />
            <path d="M11 3q5-4 11 0v4l-2 5q-4 2-7 0l-2-5z" fill={YELLOW} stroke={GOLD} />
            <path d="M11 4q6 3 11 0M12 8q5 2 9 0" fill="none" stroke={GOLD} />
          </svg>
        </button>
        <button type="button" aria-label="Visibility" className="flex w-[60px] items-center justify-center">
          <svg width="32" height="30" viewBox="0 0 32 30" fill="none" aria-hidden="true">
            <path d="M2 14h11q3 4 0 8-2 3-6 2-5-2-5-10zM18 16l12-2q1 8-4 11-6 2-8-3z" fill="#c6dfe9" stroke="#1d4658" strokeWidth="2" />
            <path d="M2 15Q0 7 8 5l6-1M30 15q2-7-1-11l-4 0M13 17l5 1" stroke="#1d4658" strokeWidth="2" />
          </svg>
        </button>
        <button type="button" aria-label="Visual" className="flex w-[60px] items-center justify-center">
          <svg width="32" height="32" viewBox="0 0 32 32" aria-hidden="true">
            <path d="M0 12h32v10H0z" fill="#5b3026" />
            <path d="M0 17h32M0 21h32" stroke="#e07a33" strokeWidth="1.500" />
            <path d="M2 25h8v2H2zM14 26h14v2H14zM0 29h9v2H0zM20 30h6v1h-6zM26 23h6v2h-6z" fill="#f1934a" />
            <circle cx="15.500" cy="13" r="11" fill={BALL} />
            <path d="M5 22q10 5 21 0" stroke="#c96f35" fill="none" />
          </svg>
        </button>
      </div>
      <div className="flex min-h-0 flex-1 flex-col gap-[2px] border border-[#b4b9c2] bg-[#f4f5f6] p-[2px]">
        <Combo label="Show" value="Show All" className="w-full" />
        <ul className="min-h-0 flex-1 border border-[#b4b9c2] bg-[repeating-linear-gradient(to_bottom,#fff_0_18px,#f4f4f4_18px_36px)] bg-white">
          <li className="flex h-5 items-center gap-[7px] pl-[5px] font-bold text-[#0a0ac0]">
            <svg width="14" height="16" viewBox="0 0 14 16" aria-hidden="true">
              <path d="M0 6l4-2 9 1v8l-5 3-8-2z" fill={TEAL_DARK} />
              <path d="M0 6l4-2 9 1-5 3z" fill="#58c5e4" />
              <path d="M6 6l6-6 2 1-6 6z" fill={YELLOW} stroke="#433" strokeWidth="0.800" />
            </svg>
            <a href="#center-grinder">Center Grinder</a>
          </li>
        </ul>
      </div>
    </aside>
  );
}

function Axes() {
  return (
    <g>
      <path d="M85 82l21-7" stroke="#077a07" strokeWidth="7" />
      <path d="M85 81l21-7" stroke="#12b812" strokeWidth="4" />
      <ellipse cx="107" cy="74" rx="4" ry="6" transform="rotate(-18 107 74)" fill="#2fe02f" />
      <path d="M107 69l12 1-9 8z" fill="#0b7a0b" />
      <path d="M85 82l4-34" stroke="#0c0ca8" strokeWidth="7" />
      <path d="M85 82l4-34" stroke="#2020f0" strokeWidth="4" />
      <path d="M83 48l9-17 6 18q-8 3-15-1z" fill="#2a2ac0" />
      <path d="M88 49l4-16 2 17z" fill="#b7b7f5" />
      <path d="M85 82l30 10" stroke="#c00c0c" strokeWidth="7" />
      <path d="M85 81l30 10" stroke="#f62020" strokeWidth="4" />
      <path d="M115 86l14 12-18 2q-2-8 4-14z" fill="#d81c1c" />
      <path d="M113 91l14 7-14-3z" fill="#ffb3b3" />
    </g>
  );
}

/* Datum planes and triad shown at the part origin */
function OriginTriad() {
  return (
    <svg width="170" height="166" viewBox="1 0 170 166" fill="none" aria-label="Origin">
      <path d="M56 27l70 27-11 83-71-26z" fill="#b8e4b8" fillOpacity="0.35" stroke="#1ee01e" />
      <path d="M64 50l53-19-10 84-53 18z" fill="#e4b4a4" fillOpacity="0.35" stroke="#e02828" />
      <path d="M24 78l54-18 69 27-53 18z" fill="#b4b4e0" fillOpacity="0.35" stroke="#2020c0" />
      <Axes />
      <g fontFamily="Liberation Sans, sans-serif" fontSize="17">
        <text x="88" y="28" fill="#3030e0">Z</text>
        <text x="120" y="75" fill="#28dc28">Y</text>
        <text x="131" y="108" fill="#ee2424">X</text>
      </g>
    </svg>
  );
}

function CornerTriad() {
  return (
    <svg width="72" height="104" viewBox="80 10 72 104" fill="none" aria-label="View orientation">
      <Axes />
      <g fontFamily="Liberation Sans, sans-serif" fontSize="17">
        <text x="88" y="28" fill="#3030e0">Z</text>
        <text x="120" y="75" fill="#28dc28">Y</text>
        <text x="131" y="108" fill="#ee2424">X</text>
      </g>
    </svg>
  );
}

function ViewBar() {
  return (
    <div className="flex h-6 items-center">
      <IconButton label="Exit" className="mr-2 w-[18px]">
        <path d="M2 1h11l2 16H3l-1-2z" fill="#17536f" />
        <path d="M9 3l1 1M8 6l-3 3M8 6l2 5-3 4M9 7l4 3M9 11l3 4" stroke="#fff" strokeWidth="1.800" />
      </IconButton>
      <IconButton label="Erase" className="mr-2 w-[18px]">
        <path d="M6 10l7-8 4 2-7 9z" fill="#eadfae" stroke="#9a8b50" />
        <path d="M2 13l4-3 4 3-3 4-4-1z" fill="#c9343f" />
        <path d="M5 11l1-2 5 4-2 2z" fill="#888" />
      </IconButton>
      <IconButton label="Plane" className="mr-[9px] w-[18px]">
        <path d="M1 7l8 4 8-3v5l-8 4-8-4z" fill="#2a93b8" />
        <path d="M1 7l8-3 8 4-8 3z" fill="#f7d22f" stroke="#a3830f" />
        <path d="M9 1v7" stroke="#333" />
      </IconButton>
      <IconButton label="Shade" className="w-[18px]">
        <path d="M1 4l8-3 8 2v10l-6 4-10-3z" fill="#48b0d6" />
        <path d="M1 4l8-3 8 2-6 3z" fill="#cdeef8" />
        <path d="M11 6l6-3v10l-6 4z" fill="#0e678a" />
      </IconButton>
      <Caret className="ml-[5px] mr-2 text-[#333]" />
      <IconButton label="Views" className="w-[18px]">
        <path d="M4 6l6-2 7 2v7l-6 4-7-3z" fill={TEAL_DARK} />
        <path d="M4 6l6-2 7 2-6 3z" fill="#7fd0ea" />
        <path d="M1 1h7v8H1z" fill="#e6f5fb" stroke="#2d85a8" />
        <path d="M3 5h3M5 3v4" stroke="#2d85a8" />
      </IconButton>
      <Caret className="ml-[6px] mr-[9px] text-[#333]" />
      <IconButton label="Wireframe" className="w-[18px]">
        <path d="M9 2l7 3v8l-7 4-7-4V6z" fill="#fbc02d" stroke="#d76a10" strokeWidth="1.300" />
        <path d="M9 2v15M2 6l14 7M16 5L2 13" stroke="#d76a10" strokeWidth="1.200" />
      </IconButton>
      <Caret className="ml-[5px] mr-[9px] text-[#333]" />
      <IconButton label="Zoom" className="w-[18px]">
        <path d="M0 0h18v18H0z" fill="#5aa9cf" />
        <circle cx="9" cy="9" r="7" fill="#e6e6e6" stroke="#dcae22" strokeWidth="2.500" />
        <path d="M6 5h5l2 2v6H6z" fill="#f5efb2" stroke="#b09b40" />
      </IconButton>
      <Caret className="ml-[5px] mr-2 text-[#333]" />
      <IconButton label="Fit" className="w-[18px]">
        <path d="M1 1h16v16H1z" fill="#fff" stroke="#8095a3" />
        <path d="M4 4h3v3H4zM4 11h3v3H4z" stroke="#6f93a8" />
        <path d="M11 4h3v3M14 10q0 4-4 4" stroke="#2a7fa3" strokeWidth="1.500" />
      </IconButton>
      <span className="ml-[7px] flex h-6 border border-[#eac96a] bg-[#fdfdfd]">
        <IconButton label="Dimension" className="w-5">
          <path d="M3 1v12M15 1v12M3 7h12" stroke="#2487a8" strokeWidth="1.800" />
          <path d="M2 16h14" stroke="#cc2731" strokeWidth="3" />
        </IconButton>
        <button type="button" aria-label="Dimension options" className="flex w-[14px] items-center justify-center border-l border-[#eac96a] bg-[#fcecae]">
          <Caret />
        </button>
      </span>
      <IconButton label="Display" className="ml-1 w-[18px]">
        <path d="M0 1h18v12H0z" fill="#6b7286" stroke="#9aa0ac" />
        <path d="M1 2h16L1 10z" fill="#b1b7c6" />
        <path d="M3 14h12l-3 3H6z" fill="#9b9fa6" />
      </IconButton>
      <Caret className="ml-[5px] mr-[10px] text-[#333]" />
      <button type="button" aria-label="Black" className="mr-2 size-[18px] border border-[#444] bg-black" />
      <button type="button" aria-label="Light blue" className="mr-[7px] size-[18px] border-2 border-black bg-[#bfe6f8]" />
      <IconButton label="Layers" className="w-[18px]">
        <path d="M1 9l9-3 7 2v4l-7 4-9-3z" fill="#14847f" />
        <path d="M1 6l7-2 9 2-8 5z" fill="#3fc0b4" stroke="#0f7d80" />
        <path d="M12 4l4-2-2 4z" fill="#2b7d99" />
      </IconButton>
      <Caret className="ml-[5px] mr-[7px] text-[#333]" />
      <span className="relative flex h-[22px] w-[120px] items-center border border-[#b4b9c2] bg-white pl-[3px]">
        <svg width="32" height="18" viewBox="0 0 32 18" fill="none" className="shrink-0" aria-hidden="true">
          <path d="M5 12q-3-3-3-6 1-4 5-4t5 4q0 3-3 6v4H5z" fill="#fdf9c4" stroke="#8b8536" />
          <circle cx="24" cy="9" r="6" fill="#f6e71d" stroke="#8a8a18" strokeWidth="1.500" />
          <path d="M18 3l2 2M30 3l-2 2M18 16l2-2M30 16l-2-2" stroke="#555" />
        </svg>
        <select aria-label="Layer" className="w-full appearance-none pl-[3px] text-black outline-none">
          <option>Layer0000</option>
        </select>
        <Caret className="pointer-events-none absolute right-[6px] top-2 text-[#333]" />
      </span>
    </div>
  );
}

function Workspace() {
  return (
    <main className="flex min-w-0 flex-1 flex-col pl-[1px]">
      <div className="flex h-[21px] shrink-0 pl-[3px] text-black">
        <div className="relative z-10 -mb-px flex w-[209px] items-center border border-b-0 border-[#b4b9c2] bg-[#fcfdfe] pl-[13px]">
          <svg width="10" height="10" viewBox="0 0 10 10" className="mr-[7px] shrink-0" aria-hidden="true">
            <path d="M4 0h2v4h4v2H6v4H4V6H0V4h4z" fill="#857343" />
          </svg>
          <span className="mr-auto whitespace-nowrap">File001.Z3 - [Center Grinder]</span>
          <button type="button" aria-label="Close file" className="mr-3">
            <svg width="11" height="10" viewBox="0 0 11 10" aria-hidden="true">
              <path d="M1 1l9 8M10 1L1 9" stroke="#7a6c35" strokeWidth="2" />
            </svg>
          </button>
        </div>
        <button type="button" aria-label="New tab" className="ml-2">
          <svg width="10" height="10" viewBox="0 0 10 10" aria-hidden="true">
            <path d="M4 0h2v4h4v2H6v4H4V6H0V4h4z" fill="#9b9fa3" />
          </svg>
        </button>
        <button type="button" aria-label="Tab list" className="ml-auto mr-[9px]">
          <svg width="9" height="9" viewBox="0 0 9 9" aria-hidden="true">
            <path d="M0 0h9v2H0zM0 4h9L4.500 9z" fill="#777b80" />
          </svg>
        </button>
      </div>
      <div className="flex min-h-0 flex-1 flex-col border border-[#b4b9c2] bg-white p-px">
        <div className="relative flex min-h-0 flex-1 items-center justify-center bg-linear-to-b from-white to-[#9e9e9e]">
          <div className="absolute left-1/2 top-[2px] -translate-x-1/2">
            <ViewBar />
          </div>
          <p className="absolute left-[13px] top-[25px] font-['Liberation_Sans',Arial,sans-serif] text-[13px] leading-4 text-black">
            &lt;right-click&gt; for context-sensitive options.
            <br />
            &lt;Shift-right-click&gt; to display pick filter.
          </p>
          <OriginTriad />
          <div className="absolute bottom-0 left-1 font-['Liberation_Sans',Arial,sans-serif] text-black">
            <div className="mb-[5px] ml-[46px]">
              <CornerTriad />
            </div>
            <p className="text-[17px] leading-5">7.87402 in</p>
          </div>
        </div>
      </div>
    </main>
  );
}

function StatusBar() {
  return (
    <footer className="flex h-7 shrink-0 items-center pl-[6px] pr-[2px]">
      <label htmlFor="command" className="mr-auto">
        Select command or entity.
      </label>
      <span className="h-6 w-px bg-[#8a8f94]" />
      <IconButton label="Toggle text" className="ml-[7px] mr-[6px] h-[22px] w-[23px] border border-[#c79a43] bg-[#fbe183]">
        <path d="M2 2h14v14H2z" fill="#fff" stroke="#3f6fb5" strokeWidth="1.500" />
        <path d="M2 2h14v3H2z" fill="#4f7fcb" />
        <path d="M4 6v9" stroke="#777" strokeDasharray="1 1" />
        <path d="M7 8h7M10.500 8v7" stroke="#8c3a3a" strokeWidth="2" />
      </IconButton>
      <IconButton label="Output" className="mr-[6px] w-[23px]">
        <path d="M2 2h14v14H2z" fill="#fff" stroke="#4f7fcb" strokeWidth="1.500" />
        <path d="M2 2h14v3H2z" fill="#4f7fcb" />
        <path d="M4 8h10M4 11h10M4 14h6" stroke="#a98a8a" />
      </IconButton>
      <input id="command" type="text" className="h-[22px] w-[349px] border border-[#b4b9c2] bg-white px-1 outline-none" />
    </footer>
  );
}

export default function App() {
  return (
    <div className="flex h-screen flex-col overflow-hidden bg-[#e1e5e8] font-['Open_Sans','Noto_Sans',sans-serif] text-[11px] leading-4 text-[#444]">
      <Gradients />
      <TitleBar />
      <RibbonTabs />
      <div className="-mt-px flex flex-col">
        <Ribbon />
      </div>
      <FilterBar />
      <div className="flex min-h-0 flex-1">
        <Manager />
        <Workspace />
      </div>
      <StatusBar />
      <div className="h-[2px] shrink-0 bg-[#6b6969]" />
    </div>
  );
}
